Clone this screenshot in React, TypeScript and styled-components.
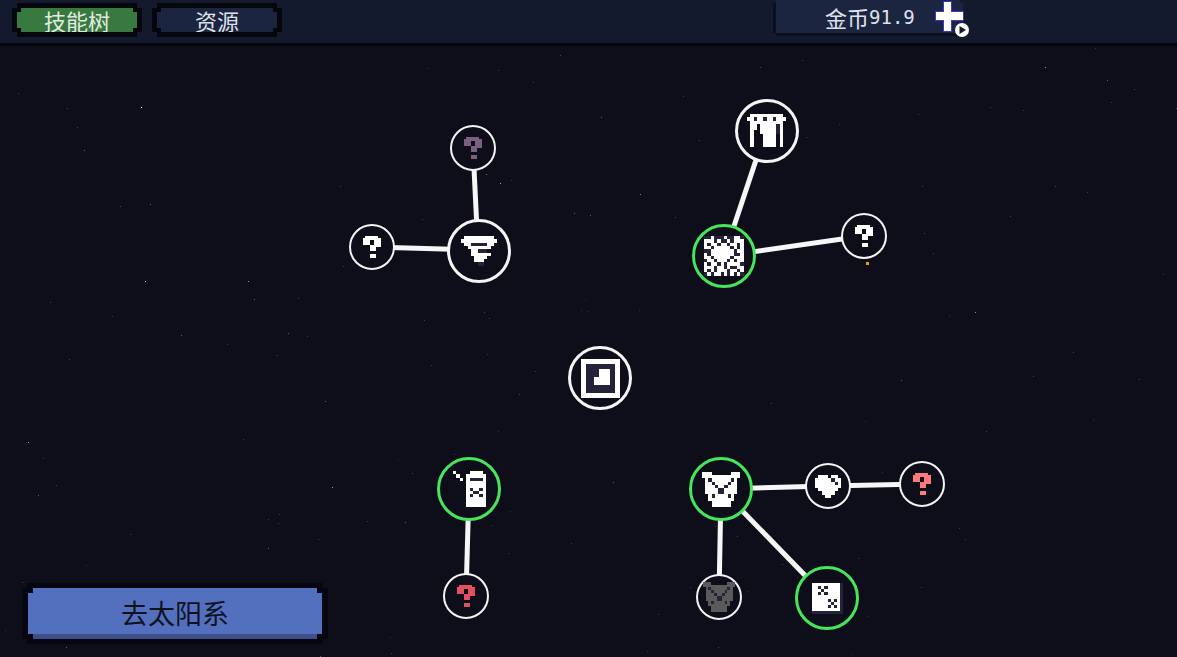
import React from 'react';
import styled, { createGlobalStyle, css } from 'styled-components';

const BAR_HEIGHT = 46;

const GlobalStyle = createGlobalStyle`
  html, body {
    margin: 0;
    padding: 0;
    height: 100%;
    background: #0d0e1a;
    overflow: hidden;
    font-family: "Noto Sans CJK SC", "Noto Sans", sans-serif;
  }
  #root { height: 100%; }
`;

// stepped corners for the pixel-art panels
const stepped = (n: number) => css`
  clip-path: polygon(
    ${n}px 0, calc(100% - ${n}px) 0, calc(100% - ${n}px) ${n}px, 100% ${n}px,
    100% calc(100% - ${n}px), calc(100% - ${n}px) calc(100% - ${n}px), calc(100% - ${n}px) 100%,
    ${n}px 100%, ${n}px calc(100% - ${n}px), 0 calc(100% - ${n}px), 0 ${n}px, ${n}px ${n}px
  );
`;

const Page = styled.div`
  position: relative;
  display: flex;
  flex-direction: column;
  height: 100%;
`;

const TopBar = styled.header`
  display: flex;
  align-items: flex-start;
  gap: 10px;
  height: ${BAR_HEIGHT - 6}px;
  padding: 3px 0 0 12px;
  background: #141a2e;
  border-bottom: 3px solid #05060a;
`;

const TabFrame = styled.button`
  ${stepped(5)}
  width: 130px;
  height: 34px;
  padding: 5px;
  border: 0;
  background: #05070d;
  box-sizing: border-box;
`;

const TabFace = styled.div<{ $active?: boolean }>`
  ${stepped(4)}
  height: 100%;
  display: flex;
  align-items: center;
  justify-content: center;
  background: ${p => (p.$active ? '#37793f' : '#1b2540')};
  color: ${p => (p.$active ? '#e4ebe4' : '#dfe2ea')};
  font-family: "Noto Sans CJK SC", sans-serif;
  font-size: 22px;
  line-height: 24px;
`;

const CoinFrame = styled.div`
  ${stepped(3)}
  width: 190px;
  height: 36px;
  margin: -3px 0 0 481px;
  padding: 0 0 3px 3px;
  box-sizing: border-box;
  background: #0b0f1f;
`;

const CoinBox = styled.div`
  display: flex;
  align-items: center;
  height: 100%;
  padding-left: 49px;
  background: #1b2540;
  color: #dfe2ea;
  font-size: 22px;
  line-height: 30px;
`;

const CoinAmount = styled.span`
  font-family: "DejaVu Sans Mono", monospace;
  font-size: 19px;
`;

const PlusIcon = styled.svg`
  position: absolute;
  left: 933px;
  top: 0;
`;

const Canvas = styled.main`
  position: relative;
  flex: 1;
  overflow: hidden;
  background: #0d0e1a;
`;

const Backdrop = styled.svg`
  position: absolute;
  inset: 0;
`;

const Node = styled.div<{ $x: number; $y: number; $big: boolean; $done?: boolean }>`
  position: absolute;
  left: ${p => p.$x}px;
  top: ${p => p.$y - BAR_HEIGHT}px;
  width: ${p => (p.$big ? 64 : 46)}px;
  height: ${p => (p.$big ? 64 : 46)}px;
  margin: ${p => (p.$big ? -32 : -23)}px;
  display: flex;
  align-items: center;
  justify-content: center;
  box-sizing: border-box;
  border-radius: 50%;
  border: ${p => (p.$big ? 3 : 2)}px solid ${p => (p.$done ? '#45e55c' : '#f4f4f4')};
  background: #0d0e1a;
`;

const GoButton = styled.button`
  ${stepped(5)}
  position: absolute;
  left: 22px;
  top: 583px;
  width: 306px;
  height: 61px;
  padding: 5px 6px;
  border: 0;
  background: #05060f;
  box-sizing: border-box;
`;

const GoFace = styled.div`
  ${stepped(5)}
  height: 100%;
  display: flex;
  align-items: center;
  justify-content: center;
  padding-bottom: 2px;
  box-sizing: border-box;
  background: #5370bf;
  box-shadow: inset 0 -5px 0 #3f4f8a;
  color: #10131f;
  font-family: "Noto Sans CJK SC", sans-serif;
  font-size: 27px;
`;

// each cell is snapped to whole screen pixels so no seams show between blocks
const PixelIcon: React.FC<{ rows: string[]; size: number; color?: string; shade?: string }> = ({
  rows,
  size,
  color = '#ffffff',
  shade = '#25233a',
}) => {
  const cols = Math.max(...rows.map(r => r.length));
  const snap = (n: number) => Math.round(n * size);
  return (
    <svg width={snap(cols)} height={snap(rows.length)} shapeRendering="crispEdges">
      {rows.map((row, y) =>
        row.split('').map((c, x) =>
          c === ' ' ? null : (
            <rect
              key={`${x}-${y}`}
              x={snap(x)}
              y={snap(y)}
              width={snap(x + 1) - snap(x)}
              height={snap(y + 1) - snap(y)}
              fill={c === '#' ? color : shade}
            />
          )
        )
      )}
    </svg>
  );
};

const question = [
  ' ###### ',
  '########',
  '###  ###',
  '###  ###',
  '   #####',
  '   ###  ',
  '   ###  ',
  '        ',
  '   ###  ',
  '   ###  ',
];
const tornado = [
  ' ######### ',
  '###########',
  ' ##.....## ',
  '  #######  ',
  '   ##...   ',
  '   ######  ',
  '    ####   ',
  '    ###    ',
  '     ..    ',
];
const gate = [
  ' ########## ',
  '##.##.##.###',
  ' ########## ',
  ' ## #####.# ',
  ' ## #####.# ',
  ' #  #####.# ',
  ' #   #### # ',
  ' #   #### # ',
  ' #   #### # ',
  ' #   #### # ',
];
const noise = [
  '..#...#..##.',
  '###.#..#.###',
  '#.##.##.##.#',
  '##.#####.#.#',
  '..#######.##',
  '#.#######..#',
  '##.#####.###',
  '.##.###.#.##',
  '#.##.#.####.',
  '###.##.#..##',
  '#.#.###.##.#',
  '.#.##.#.#.#.',
];
const can = [
  '#    #### ',
  ' #  ######',
  '  # #....#',
  '    ######',
  '    ######',
  '    #.##.#',
  '    ##..##',
  '    #.##.#',
  '    ######',
  '    ######',
  '    ######',
];
const bucket = [
  '###      ###',
  '############',
  ' #.######.# ',
  ' ##.####.## ',
  ' ###.##.### ',
  ' ####..#### ',
  ' ####..#### ',
  '  #.####.#  ',
  '  ########  ',
  '   ######   ',
  '   ######   ',
];
const dice = [
  '#########.',
  '##.#.####.',
  '###.#####.',
  '##.#.####.',
  '#########.',
  '#####.#.#.',
  '######.##.',
  '#####.#.#.',
  '#########.',
  '..........',
];
const heart = [
  ' ### ## ',
  '#####.##',
  '######.#',
  '########',
  ' ###### ',
  '  ####  ',
  '   ##   ',
];
const frameIcon = [
  '###############',
  '###############',
  '##...........##',
  '##...........##',
  '##.....####..##',
  '##.....####..##',
  '##.....####..##',
  '##...######..##',
  '##...######..##',
  '##...######..##',
  '##...........##',
  '##...........##',
  '##...........##',
  '###############',
  '###############',
];

const nodes: { id: string; x: number; y: number; big?: boolean; done?: boolean; rows: string[]; size: number; color?: string }[] = [
  { id: 'home', x: 600, y: 378, big: true, rows: frameIcon, size: 2.6 },
  { id: 'tornado', x: 478.5, y: 250.5, big: true, rows: tornado, size: 3.3 },
  { id: 'q-top', x: 473, y: 148, rows: question, size: 2.2, color: '#7c5f80' },
  { id: 'q-left', x: 372, y: 247, rows: question, size: 2.2 },
  { id: 'gate', x: 766.5, y: 130.5, big: true, rows: gate, size: 3.25 },
  { id: 'noise', x: 724, y: 256, big: true, done: true, rows: noise, size: 3.3 },
  { id: 'q-right', x: 863.5, y: 236, rows: question, size: 2.2 },
  { id: 'can', x: 469, y: 488.5, big: true, done: true, rows: can, size: 3.3 },
  { id: 'q-red', x: 466, y: 596, rows: question, size: 2.2, color: '#e0505f' },
  { id: 'bucket', x: 721, y: 489, big: true, done: true, rows: bucket, size: 3.2 },
  { id: 'heart', x: 828, y: 486, rows: heart, size: 3.25 },
  { id: 'q-pink', x: 922, y: 484, rows: question, size: 2.2, color: '#ff7a7a' },
  { id: 'bucket-grey', x: 719, y: 597, rows: bucket, size: 2.7, color: '#5a5a5a' },
  { id: 'dice', x: 827, y: 598, big: true, done: true, rows: dice, size: 3.1 },
];

const edges = [
  [473, 148, 478, 250],
  [372, 247, 478, 250],
  [766, 130, 724, 256],
  [724, 256, 863, 236],
  [469, 488, 466, 596],
  [721, 489, 828, 486],
  [828, 486, 922, 484],
  [721, 489, 719, 597],
  [721, 489, 827, 598],
];

// seeded so the star field stays the same between renders
const makeStars = (count: number) => {
  let seed = 4711;
  const next = () => {
    seed = (seed * 16807) % 2147483647;
    return seed / 2147483647;
  };
  const tints = ['#45454f', '#3a3a44', '#5c5c66', '#4a4030', '#33333d'];
  return Array.from({ length: count }, () => ({
    x: Math.floor(next() * 1177),
    y: Math.floor(next() * 611) + BAR_HEIGHT,
    fill: tints[Math.floor(next() * tints.length)],
  }));
};

const stars = [
  ...makeStars(130),
  { x: 141, y: 107, fill: '#e8e8e8' },
  { x: 145, y: 281, fill: '#c8c8c8' },
  { x: 28, y: 442, fill: '#d8a010' },
  { x: 975, y: 312, fill: '#c88a10' },
  { x: 500, y: 183, fill: '#e8a810' },
  { x: 486, y: 174, fill: '#a06a30' },
  { x: 332, y: 487, fill: '#c8a020' },
  { x: 1045, y: 67, fill: '#909098' },
  { x: 248, y: 281, fill: '#a09070' },
  { x: 640, y: 194, fill: '#a07a30' },
];

const App: React.FC = () => (
  <Page>
    <GlobalStyle />
    <TopBar>
      <TabFrame>
        <TabFace $active>技能树</TabFace>
      </TabFrame>
      <TabFrame>
        <TabFace>资源</TabFace>
      </TabFrame>
      <CoinFrame>
        <CoinBox>
          金币<CoinAmount>91.9</CoinAmount>
        </CoinBox>
      </CoinFrame>
      <PlusIcon width="38" height="40" viewBox="0 0 38 40" shapeRendering="crispEdges">
        <path d="M10 1h8v10h12v9H18v11h-8V20H2v-9h8z" fill="#ffffff" stroke="#3a3ac8" strokeWidth="1" />
        <circle cx="29" cy="30" r="7" fill="#ffffff" shapeRendering="auto" />
        <path d="M26.5 26l6.5 4-6.5 4z" fill="#141a2e" shapeRendering="auto" />
      </PlusIcon>
    </TopBar>
    <Canvas>
      <Backdrop width="1177" height="611" viewBox={`0 ${BAR_HEIGHT} 1177 611`}>
        {stars.map((s, i) => (
          <rect key={i} x={s.x} y={s.y} width="1" height="1" fill={s.fill} />
        ))}
        <rect x="866" y="262" width="3" height="3" fill="#e0a010" />
        {edges.map(([x1, y1, x2, y2], i) => (
          <line key={i} x1={x1} y1={y1} x2={x2} y2={y2} stroke="#f6f6f6" strokeWidth="5" />
        ))}
      </Backdrop>
      {nodes.map(n => (
        <Node key={n.id} $x={n.x} $y={n.y} $big={!!n.big} $done={n.done}>
          <PixelIcon rows={n.rows} size={n.size} color={n.color} />
        </Node>
      ))}
    </Canvas>
    <GoButton>
      <GoFace>去太阳系</GoFace>
    </GoButton>
  </Page>
);

export default App;
